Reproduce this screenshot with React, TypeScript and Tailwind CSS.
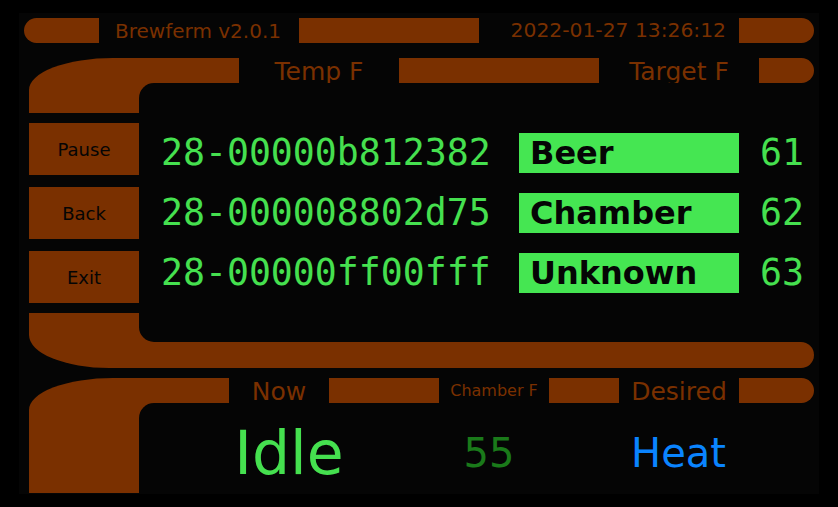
import React from "react";

const BR = "bg-[#7a3000]";
const TB = "text-[#7a3000]";

function Row({ id, label, value }: { id: string; label: string; value: string }) {
  return (
    <div className="flex items-center h-[40px]">
      <div className="w-[359px] text-[36.5px] leading-none text-[#45e04f] whitespace-nowrap font-['DejaVu_Sans_Mono',monospace] pl-[1px]">
        {id}
      </div>
      <div className="w-[220px] h-[40px] bg-[#45e652] flex items-center pl-[11px] text-[32px] font-bold leading-none text-[#050505] whitespace-nowrap">
        {label}
      </div>
      <div className="ml-[21px] text-[36.5px] leading-none text-[#45e04f] font-['DejaVu_Sans_Mono',monospace]">
        {value}
      </div>
    </div>
  );
}

function Btn({ label }: { label: string }) {
  return (
    <div className={`h-[52px] ${BR} flex items-center justify-center pt-[2px] text-[18px] leading-none text-[#050505]`}>
      {label}
    </div>
  );
}

export default function App() {
  return (
    <div className="w-[838px] h-[507px] bg-black pt-[13px] pl-[19px] font-['DejaVu_Sans',sans-serif]">
      <div className="w-[800px] h-[481px] bg-[#050505] flex flex-col pt-[5px]">
        {/* top row */}
        <div className="flex h-[25px] ml-[5px] w-[790px]">
          <div className={`w-[75px] ${BR} rounded-l-full`} />
          <div className={`w-[200px] flex items-center justify-center pr-[2px] text-[20px] leading-none ${TB}`}>
            Brewferm v2.0.1
          </div>
          <div className={`w-[180px] ${BR}`} />
          <div className={`w-[260px] flex items-center justify-end pr-[13px] text-[20.3px] leading-none ${TB}`}>
            2022-01-27 13:26:12
          </div>
          <div className={`w-[75px] ${BR} rounded-r-full`} />
        </div>

        {/* section A */}
        <div className="flex mt-[15px] ml-[10px] w-[785px]">
          <div className="flex flex-col w-[110px]">
            <div className={`h-[55px] ${BR} rounded-tl-[84px_32px]`} />
            <div className="mt-[10px]">
              <Btn label="Pause" />
            </div>
            <div className="mt-[12px]">
              <Btn label="Back" />
            </div>
            <div className="mt-[12px]">
              <Btn label="Exit" />
            </div>
            <div className={`mt-[10px] h-[55px] ${BR} rounded-bl-[80px_33px]`} />
          </div>
          <div className="flex flex-col w-[675px]">
            <div className="flex h-[25px]">
              <div className={`w-[100px] ${BR}`} />
              <div className={`w-[160px] flex items-center justify-center pt-[2px] text-[25px] leading-none ${TB}`}>Temp F</div>
              <div className={`w-[200px] ${BR}`} />
              <div className={`w-[160px] flex items-center justify-center pt-[2px] text-[25px] leading-none ${TB}`}>Target F</div>
              <div className={`w-[55px] ${BR} rounded-r-full`} />
            </div>
            <div className={`h-[259px] ${BR}`}>
              <div className="h-full bg-[#050505] rounded-l-[15px] pl-[21px] pt-[50px] flex flex-col gap-[20px]">
                <Row id="28-00000b812382" label="Beer" value="61" />
                <Row id="28-000008802d75" label="Chamber" value="62" />
                <Row id="28-00000ff00fff" label="Unknown" value="63" />
              </div>
            </div>
            <div className={`h-[26px] ${BR} rounded-r-full`} />
          </div>
        </div>

        {/* section B */}
        <div className="flex mt-[10px] ml-[10px] w-[785px]">
          <div className={`w-[110px] h-[115px] ${BR} rounded-tl-[84px_32px]`} />
          <div className="flex flex-col w-[675px]">
            <div className="flex h-[25px]">
              <div className={`w-[90px] ${BR}`} />
              <div className={`w-[100px] flex items-center justify-center pt-[2px] text-[25px] leading-none ${TB}`}>Now</div>
              <div className={`w-[110px] ${BR}`} />
              <div className={`w-[110px] flex items-center justify-center pt-[1px] text-[16px] leading-none ${TB}`}>Chamber F</div>
              <div className={`w-[70px] ${BR}`} />
              <div className={`w-[120px] flex items-center justify-center pt-[2px] text-[25px] leading-none ${TB}`}>Desired</div>
              <div className={`w-[75px] ${BR} rounded-r-full`} />
            </div>
            <div className={`h-[90px] ${BR}`}>
              <div className="h-full bg-[#050505] rounded-tl-[15px] flex items-center pt-[9px]">
                <div className="w-[300px] shrink-0 text-center text-[60px] leading-none text-[#45e04f]">Idle</div>
                <div className="w-[100px] shrink-0 text-center text-[40px] leading-none text-[#1a7a1a]">55</div>
                <div className="w-[271px] shrink-0 pl-[8px] text-center text-[40px] leading-none text-[#0a84ff]">Heat</div>
              </div>
            </div>
          </div>
        </div>
      </div>
    </div>
  );
}
